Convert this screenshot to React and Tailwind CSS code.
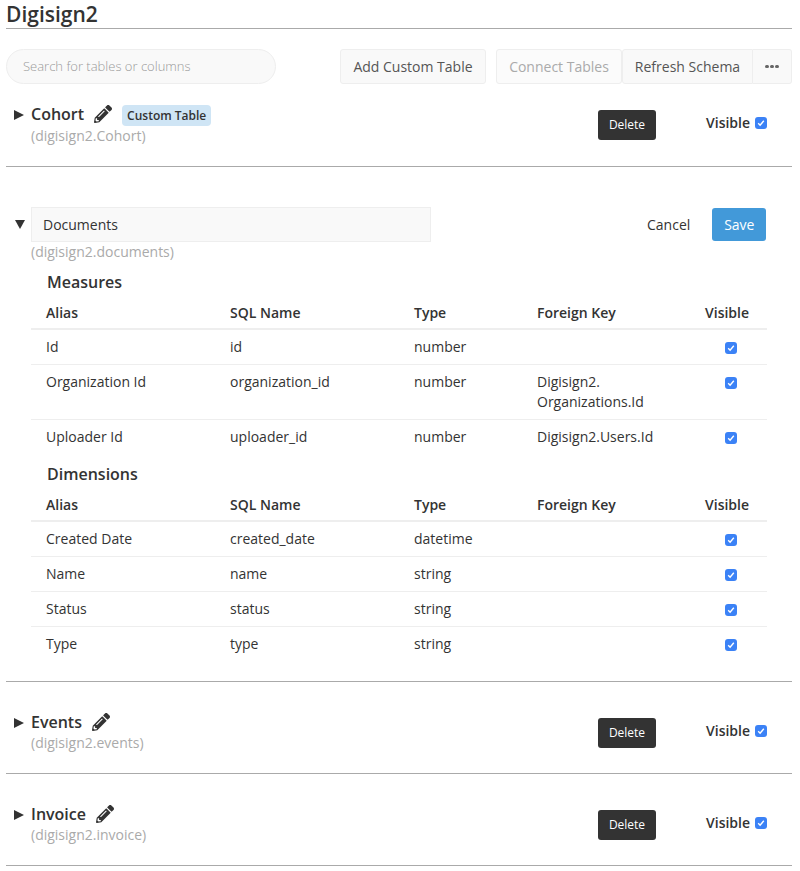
import React from "react";
import { FaPencilAlt } from "react-icons/fa";

const measures = [
  { alias: "Id", sql: "id", type: "number", fk: "" },
  { alias: "Organization Id", sql: "organization_id", type: "number", fk: "Digisign2.\nOrganizations.Id" },
  { alias: "Uploader Id", sql: "uploader_id", type: "number", fk: "Digisign2.Users.Id" },
];

const dimensions = [
  { alias: "Created Date", sql: "created_date", type: "datetime", fk: "" },
  { alias: "Name", sql: "name", type: "string", fk: "" },
  { alias: "Status", sql: "status", type: "string", fk: "" },
  { alias: "Type", sql: "type", type: "string", fk: "" },
];

const Check = () => (
  <span className="flex h-[12px] w-[12px] items-center justify-center rounded-[3px] bg-[#3b82f6]">
    <svg width="8" height="8" viewBox="0 0 8 8" fill="none">
      <path d="M1.2 4.3 3.1 6.2 6.8 1.8" stroke="white" strokeWidth="1.4" />
    </svg>
  </span>
);

const Arrow = ({ open }) => (
  <span className={open ? "h-0 w-0 border-x-[5px] border-t-[9px] border-x-transparent border-t-[#333]" : "h-0 w-0 border-y-[5px] border-l-[10px] border-y-transparent border-l-[#333]"} />
);

const ColumnsTable = ({ rows }) => {
  return (
    <div>
      <div className="grid h-[34px] grid-cols-[184px_184px_123px_168px_77px] items-center border-b-2 border-[#eee] text-[14px] font-semibold text-[#333]">
        <div className="pl-[15px]">Alias</div>
        <div className="pl-[15px]">SQL Name</div>
        <div className="pl-[15px]">Type</div>
        <div className="pl-[15px]">Foreign Key</div>
        <div className="pl-[15px]">Visible</div>
      </div>
      {rows.map((r, i) => (
        <div key={r.alias} className={"grid grid-cols-[184px_184px_123px_168px_77px] py-[7px] text-[14px] leading-[20px] text-[#333] " + (i < rows.length - 1 ? "border-b border-[#eee]" : "")}>
          <div className="pl-[15px]">{r.alias}</div>
          <div className="pl-[15px]">{r.sql}</div>
          <div className="pl-[15px]">{r.type}</div>
          <div className="whitespace-pre-line pl-[15px]">{r.fk}</div>
          <div className="flex h-[20px] items-center justify-center pl-[18px] pr-[13px] pt-[2px]"><Check /></div>
        </div>
      ))}
    </div>
  );
};

const TableRow = ({ name, sql, badge, first }) => {
  return (
    <div className={"flex items-start border-b border-[#aaa] " + (first ? "h-[83px] pt-[19px]" : "h-[92px] pt-[29px]")}>
      <div className="flex w-[25px] justify-start pl-[8px] pt-[7px]"><Arrow /></div>
      <div className="w-[567px]">
        <div className="flex h-[22px] items-center text-[16px] font-semibold text-[#333]">
          {name}
          <FaPencilAlt className="ml-[10px] text-[18px] text-[#333]" />
          {badge && <span className="ml-[10px] mt-[2px] rounded-[4px] bg-[#cfe5f5] px-[5px] py-[1px] text-[12px] font-semibold leading-[19px] text-[#333]">{badge}</span>}
        </div>
        <div className={"text-[14px] leading-[21px] text-[#aaa] " + (first ? "" : "-mt-[1px]")}>{sql}</div>
      </div>
      <button className="mt-[7px] h-[30px] w-[58px] rounded-[3px] bg-[#333] text-[12px] font-medium text-white">Delete</button>
      <div className="ml-[50px] mt-[7px] flex h-[22px] items-center pt-[3px] text-[14px] font-semibold text-[#333]">
        Visible
        <span className="ml-[5px] mt-[1px]"><Check /></span>
      </div>
    </div>
  );
};

export default function App() {
  return (
    <div className="min-h-[871px] bg-white pl-[6px] pr-[8px] font-['Open_Sans',sans-serif]">
      <h1 className="h-[29px] border-b border-[#aaa] text-[21px] font-semibold leading-[28px] text-[#333]">Digisign2</h1>

      {/* toolbar */}
      <div className="mt-[20px] flex h-[35px] items-center text-[14px]">
        <input
          className="h-[35px] w-[270px] rounded-full border border-[#eee] bg-[#f9f9f9] pb-[2px] pl-[16px] pr-[16px] text-[13px] font-light outline-none placeholder:text-[#999]"
          placeholder="Search for tables or columns"
        />
        <button className="ml-[64px] h-[35px] w-[146px] rounded-[3px] border border-[#eee] bg-[#f9f9f9] text-[#555]">Add Custom Table</button>
        <button className="ml-[10px] h-[35px] w-[126px] rounded-[3px] border border-[#eee] bg-[#fbfbfb] text-[#aaa]">Connect Tables</button>
        <button className="h-[35px] w-[131px] rounded-l-[3px] border border-[#eee] bg-[#f9f9f9] text-[#555]">Refresh Schema</button>
        <button className="flex h-[35px] w-[39px] items-center justify-center gap-[1.5px] rounded-r-[3px] border border-l-0 border-[#eee] bg-[#f9f9f9]">
          <span className="h-[3.5px] w-[3.5px] rounded-full bg-[#666]" />
          <span className="h-[3.5px] w-[3.5px] rounded-full bg-[#666]" />
          <span className="h-[3.5px] w-[3.5px] rounded-full bg-[#666]" />
        </button>
      </div>

      <TableRow first name="Cohort" sql="(digisign2.Cohort)" badge="Custom Table" />

      {/* open table */}
      <div className="h-[515px] border-b border-[#aaa] pt-[40px]">
        <div className="flex items-start">
          <div className="flex w-[25px] pl-[9px] pt-[13px]"><Arrow open /></div>
          <input
            className="h-[35px] w-[400px] border border-[#eee] bg-[#f9f9f9] px-[11px] text-[14px] text-[#333] outline-none"
            defaultValue="Documents"
          />
          <button className="ml-[216px] mt-[1px] h-[33px] text-[14px] text-[#333]">Cancel</button>
          <button className="ml-[22px] mt-[1px] h-[33px] w-[54px] rounded-[3px] bg-[#4299d9] text-[14px] text-white">Save</button>
        </div>
        <div className="ml-[25px] w-[736px]">
          <div className="text-[14px] leading-[19px] text-[#aaa]">(digisign2.documents)</div>
          <h3 className="mt-[9px] h-[26px] pl-[16px] text-[16px] font-semibold leading-[24px] text-[#333]">Measures</h3>
          <ColumnsTable rows={measures} />
          <h3 className="mt-[8px] h-[26px] pl-[16px] text-[16px] font-semibold leading-[24px] text-[#333]">Dimensions</h3>
          <ColumnsTable rows={dimensions} />
        </div>
      </div>

      <TableRow name="Events" sql="(digisign2.events)" />
      <TableRow name="Invoice" sql="(digisign2.invoice)" />
    </div>
  );
}
